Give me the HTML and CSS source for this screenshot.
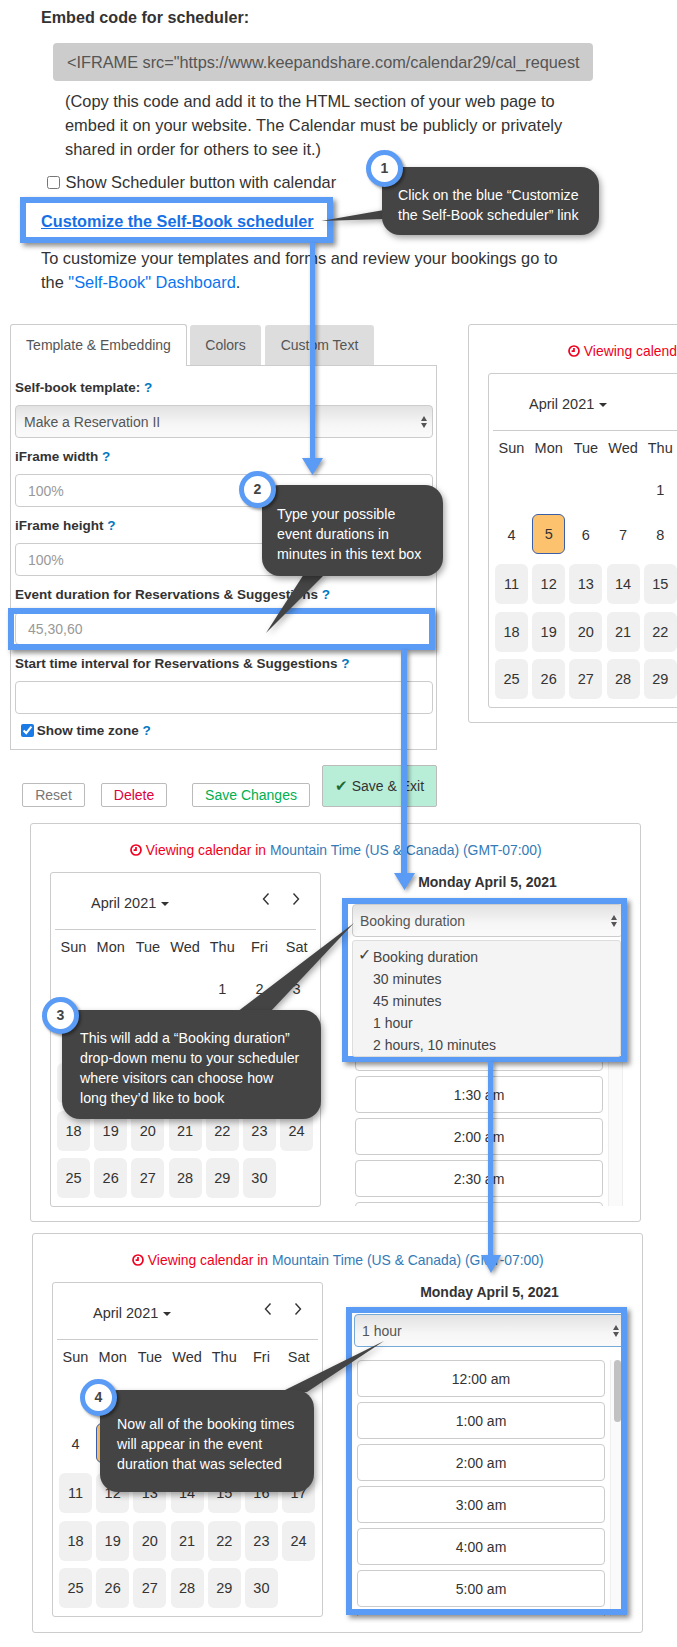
FILE: index.html
```html
<!DOCTYPE html>
<html lang="en">
<head>
    <meta charset="UTF-8">
    <meta name="viewport" content="width=device-width, initial-scale=1.0">
    <title>Self-Book scheduler</title>
    <link rel="stylesheet" href="styles.css">
</head>
<body>
    <div class="page">
        <h3 class="embed-title">Embed code for scheduler:</h3>
        <div class="code-box">&lt;IFRAME src="https://www.keepandshare.com/calendar29/cal_request</div>
        <p class="embed-note">(Copy this code and add it to the HTML section of your web page to embed it on your website. The Calendar must be publicly or privately shared in order for others to see it.)</p>
        <label class="show-button"><input type="checkbox"> Show Scheduler button with calendar</label>
        <a class="customize-link" href="#">Customize the Self-Book scheduler</a>
        <p class="dash-note">To customize your templates and forms and review your bookings go to<br>the <a href="#">"Self-Book" Dashboard</a>.</p>

        <div class="editor-row">
            <div class="editor">
                <div class="tabs">
                    <div class="tab active">Template &amp; Embedding</div>
                    <div class="tab tab-colors">Colors</div>
                    <div class="tab tab-text">Custom Text</div>
                </div>
                <div class="panel">
                    <div class="field">
                        <label>Self-book template: <span class="help">?</span></label>
                        <div class="select-wrap">
                            <select class="select"><option>Make a Reservation II</option></select>
                            <span class="updown"></span>
                        </div>
                    </div>
                    <div class="field">
                        <label>iFrame width <span class="help">?</span></label>
                        <input type="text" placeholder="100%">
                    </div>
                    <div class="field">
                        <label>iFrame height <span class="help">?</span></label>
                        <input type="text" placeholder="100%">
                    </div>
                    <div class="field">
                        <label>Event duration for Reservations &amp; Suggestions <span class="help">?</span></label>
                        <input type="text" placeholder="45,30,60">
                    </div>
                    <div class="field">
                        <label>Start time interval for Reservations &amp; Suggestions <span class="help">?</span></label>
                        <input type="text">
                    </div>
                    <label class="show-zone"><input type="checkbox" checked> Show time zone <span class="help">?</span></label>
                </div>
                <div class="actions">
                    <button class="btn btn-reset">Reset</button>
                    <button class="btn btn-delete">Delete</button>
                    <button class="btn btn-save">Save Changes</button>
                    <button class="btn btn-exit"><span class="tick-mark">✔</span> Save &amp; Exit</button>
                </div>
            </div>

            <div class="card card-one">
                <div class="tz-note"><svg class="clock" viewBox="0 0 12 12"><circle cx="6" cy="6" r="5"/><path d="M6 3v3.2H3.6"/></svg> Viewing calendar in <span class="tz-name">Mountain Time (US &amp; Canada) (GMT-07:00)</span></div>
                <div class="card-body">
                    <div class="cal">
                        <div class="cal-head">
                            <span class="month">April 2021</span><span class="caret"></span>
                        </div>
                        <div class="cal-grid">
                            <span class="dow">Sun</span><span class="dow">Mon</span><span class="dow">Tue</span><span class="dow">Wed</span><span class="dow">Thu</span><span class="dow">Fri</span><span class="dow">Sat</span>
                            <span></span><span></span><span></span><span></span><span class="day">1</span><span class="day">2</span><span class="day">3</span>
                            <span class="day">4</span><span class="day sel">5</span><span class="day">6</span><span class="day">7</span><span class="day">8</span><span class="day">9</span><span class="day">10</span>
                            <span class="day on">11</span><span class="day on">12</span><span class="day on">13</span><span class="day on">14</span><span class="day on">15</span><span class="day on">16</span><span class="day on">17</span>
                            <span class="day on">18</span><span class="day on">19</span><span class="day on">20</span><span class="day on">21</span><span class="day on">22</span><span class="day on">23</span><span class="day on">24</span>
                            <span class="day on">25</span><span class="day on">26</span><span class="day on">27</span><span class="day on">28</span><span class="day on">29</span><span class="day on">30</span>
                        </div>
                    </div>
                </div>
            </div>
        </div>

        <div class="card card-two">
            <div class="tz-note"><svg class="clock" viewBox="0 0 12 12"><circle cx="6" cy="6" r="5"/><path d="M6 3v3.2H3.6"/></svg> Viewing calendar in <span class="tz-name">Mountain Time (US &amp; Canada) (GMT-07:00)</span></div>
            <div class="card-body">
                <div class="cal">
                    <div class="cal-head">
                        <span class="month">April 2021</span><span class="caret"></span>
                        <svg class="nav nav-prev" viewBox="0 0 8 14"><path d="M6.5 1.5 1.5 7l5 5.500"/></svg>
                        <svg class="nav nav-next" viewBox="0 0 8 14"><path d="M1.500 1.500 6.500 7l-5 5.500"/></svg>
                    </div>
                    <div class="cal-grid">
                        <span class="dow">Sun</span><span class="dow">Mon</span><span class="dow">Tue</span><span class="dow">Wed</span><span class="dow">Thu</span><span class="dow">Fri</span><span class="dow">Sat</span>
                        <span></span><span></span><span></span><span></span><span class="day">1</span><span class="day">2</span><span class="day">3</span>
                        <span class="day">4</span><span class="day sel">5</span><span class="day">6</span><span class="day">7</span><span class="day">8</span><span class="day">9</span><span class="day">10</span>
                        <span class="day on">11</span><span class="day on">12</span><span class="day on">13</span><span class="day on">14</span><span class="day on">15</span><span class="day on">16</span><span class="day on">17</span>
                        <span class="day on">18</span><span class="day on">19</span><span class="day on">20</span><span class="day on">21</span><span class="day on">22</span><span class="day on">23</span><span class="day on">24</span>
                        <span class="day on">25</span><span class="day on">26</span><span class="day on">27</span><span class="day on">28</span><span class="day on">29</span><span class="day on">30</span>
                    </div>
                </div>
                <div class="slots">
                    <div class="slots-title">Monday April 5, 2021</div>
                    <div class="select-wrap">
                        <select class="select"><option>Booking duration</option></select>
                        <span class="updown"></span>
                    </div>
                    <ul class="duration-menu">
                        <li><span class="check">✓</span>Booking duration</li>
                        <li>30 minutes</li>
                        <li>45 minutes</li>
                        <li>1 hour</li>
                        <li>2 hours, 10 minutes</li>
                    </ul>
                    <div class="slot-area">
                        <div class="slot-list">
                            <button class="slot">12:00 am</button>
                            <button class="slot">12:30 am</button>
                            <button class="slot">1:00 am</button>
                            <button class="slot">1:30 am</button>
                            <button class="slot">2:00 am</button>
                            <button class="slot">2:30 am</button>
                            <button class="slot">3:00 am</button>
                        </div>
                        <div class="scrollbar"></div>
                    </div>
                </div>
            </div>
        </div>

        <div class="card card-three">
            <div class="tz-note"><svg class="clock" viewBox="0 0 12 12"><circle cx="6" cy="6" r="5"/><path d="M6 3v3.2H3.6"/></svg> Viewing calendar in <span class="tz-name">Mountain Time (US &amp; Canada) (GMT-07:00)</span></div>
            <div class="card-body">
                <div class="cal">
                    <div class="cal-head">
                        <span class="month">April 2021</span><span class="caret"></span>
                        <svg class="nav nav-prev" viewBox="0 0 8 14"><path d="M6.5 1.5 1.5 7l5 5.500"/></svg>
                        <svg class="nav nav-next" viewBox="0 0 8 14"><path d="M1.500 1.500 6.500 7l-5 5.500"/></svg>
                    </div>
                    <div class="cal-grid">
                        <span class="dow">Sun</span><span class="dow">Mon</span><span class="dow">Tue</span><span class="dow">Wed</span><span class="dow">Thu</span><span class="dow">Fri</span><span class="dow">Sat</span>
                        <span></span><span></span><span></span><span></span><span class="day">1</span><span class="day">2</span><span class="day">3</span>
                        <span class="day">4</span><span class="day sel">5</span><span class="day">6</span><span class="day">7</span><span class="day">8</span><span class="day">9</span><span class="day">10</span>
                        <span class="day on">11</span><span class="day on">12</span><span class="day on">13</span><span class="day on">14</span><span class="day on">15</span><span class="day on">16</span><span class="day on">17</span>
                        <span class="day on">18</span><span class="day on">19</span><span class="day on">20</span><span class="day on">21</span><span class="day on">22</span><span class="day on">23</span><span class="day on">24</span>
                        <span class="day on">25</span><span class="day on">26</span><span class="day on">27</span><span class="day on">28</span><span class="day on">29</span><span class="day on">30</span>
                    </div>
                </div>
                <div class="slots">
                    <div class="slots-title">Monday April 5, 2021</div>
                    <div class="select-wrap">
                        <select class="select select-focus"><option>1 hour</option></select>
                        <span class="updown"></span>
                    </div>
                    <div class="slot-area">
                        <div class="slot-list">
                            <button class="slot">12:00 am</button>
                            <button class="slot">1:00 am</button>
                            <button class="slot">2:00 am</button>
                            <button class="slot">3:00 am</button>
                            <button class="slot">4:00 am</button>
                            <button class="slot">5:00 am</button>
                            <button class="slot">6:00 am</button>
                        </div>
                        <div class="scrollbar"><span class="thumb"></span></div>
                    </div>
                </div>
            </div>
        </div>

        <!-- annotations drawn over the screenshot -->
        <div class="hl hl-link"></div>
        <div class="hl hl-duration"></div>
        <div class="hl hl-menu"></div>
        <div class="hl hl-times"></div>

        <svg class="arrows" viewBox="0 0 677 1647">
            <g class="tails">
                <polygon points="321,221 384,210 384,219"/>
                <polygon points="304,574 325,574 266,633"/>
                <polygon points="237,1012 270,1012 354,923"/>
                <polygon points="281,1392 307,1392 384,1341"/>
            </g>
            <g class="arrow-lines">
                <path d="M310 243h5v215h8l-10.500 17-10.500-17h8z"/>
                <path d="M401 650h6v223h8l-10.500 17-10.500-17h7z"/>
                <path d="M488 1062h5v193h8l-10 18-10-18h7z"/>
            </g>
        </svg>

        <div class="callout callout-1">Click on the blue “Customize<br>the Self-Book scheduler” link</div>
        <div class="callout callout-2">Type your possible<br>event durations in<br>minutes in this text box</div>
        <div class="callout callout-3">This will add a “Booking duration”<br>drop-down menu to your scheduler<br>where visitors can choose how<br>long they’d like to book</div>
        <div class="callout callout-4">Now all of the booking times<br>will appear in the event<br>duration that was selected</div>

        <div class="step step-1">1</div>
        <div class="step step-2">2</div>
        <div class="step step-3">3</div>
        <div class="step step-4">4</div>
    </div>
</body>
</html>
```

FILE: styles.css
```css
html, body {
    margin: 0;
    padding: 0;
    background-color: #fff;
}
body {
    font-family: "Liberation Sans", Arial, sans-serif;
    font-size: 14px;
    color: #333;
}
.page {
    position: relative;
    width: 677px;
    height: 1647px;
    overflow: hidden;
}

/* embed section */
.embed-title {
    margin: 0;
    padding: 7px 0 0 41px;
    font-size: 16.150px;
    line-height: 20px;
    font-weight: bold;
}
.code-box {
    margin: 16px 0 0 53px;
    width: 526px;
    height: 38px;
    padding-left: 14px;
    line-height: 38px;
    font-size: 16.300px;
    color: #555;
    background-color: #ccc;
    border-radius: 4px;
    white-space: nowrap;
    overflow: hidden;
}
.embed-note {
    margin: 8px 0 0 65px;
    width: 530px;
    font-size: 16.400px;
    line-height: 24px;
}
.show-button {
    display: block;
    margin: 11px 0 0 47px;
    font-size: 16.400px;
    line-height: 20px;
}
.show-button input {
    margin: 0 1px 0 0;
    width: 13px;
    height: 13px;
    vertical-align: -1px;
}
.customize-link {
    display: block;
    margin: 19px 0 0 41px;
    font-size: 16.250px;
    line-height: 20px;
    font-weight: bold;
    color: #1570e6;
}
.dash-note {
    margin: 15px 0 0 41px;
    font-size: 16.400px;
    line-height: 24px;
}
.dash-note a {
    color: #0a74f0;
    text-decoration: none;
}

/* template form */
.editor-row {
    display: flex;
    gap: 31px;
    margin: 30px 0 0 10px;
    align-items: flex-start;
}
.editor {
    flex: 0 0 427px;
}
.tabs {
    display: flex;
    gap: 3px;
    margin-bottom: -1px;
    position: relative;
}
.tab {
    height: 40px;
    line-height: 40px;
    font-size: 14px;
    text-align: center;
    color: #555;
    background-color: #ddd;
    margin-top: 1px;
    border-radius: 3px 3px 0 0;
}
.tab-colors {
    width: 71px;
}
.tab-text {
    width: 109px;
    margin-left: 1px;
}
.tab.active {
    margin-top: 0;
    height: 41px;
    width: 175px;
    background-color: #fff;
    border: 1px solid #ccc;
    border-bottom: none;
}
.panel {
    height: 371px;
    border: 1px solid #ccc;
    padding: 12px 3px 0 4px;
}
.field {
    margin-bottom: 9px;
}
.field label, .show-zone {
    display: block;
    font-size: 13.500px;
    line-height: 20px;
    font-weight: bold;
    margin-bottom: 7px;
}
.help {
    color: #0077c0;
}
.field input {
    display: block;
    box-sizing: border-box;
    width: 418px;
    height: 33px;
    padding: 0 12px;
    font: inherit;
    font-size: 14px;
    border: 1px solid #ccc;
    border-radius: 4px;
}
.field input::placeholder {
    color: #999;
}
.show-zone {
    margin-left: 6px;
    margin-top: -2px;
}
.show-zone input {
    margin: 0 -1px 0 0;
    width: 13px;
    height: 13px;
    vertical-align: -2px;
    accent-color: #1a7ae6;
}
.select-wrap {
    position: relative;
}
.select {
    display: block;
    box-sizing: border-box;
    width: 100%;
    height: 33px;
    padding: 0 8px;
    font: inherit;
    font-size: 14px;
    color: #555;
    border: 1px solid #ccc;
    border-radius: 4px;
    appearance: none;
    background: linear-gradient(#e2e2e2, #f6f6f6 60%, #fafafa);
}
.slots .select {
    padding-left: 7px;
}
.select-focus {
    border-color: #74a9d8;
}
.updown, .updown::before {
    position: absolute;
}
.updown {
    right: 6px;
    top: 50%;
    margin-top: 1px;
    border-left: 3.500px solid transparent;
    border-right: 3.500px solid transparent;
    border-top: 5px solid #555;
}
.updown::before {
    content: "";
    left: -3.500px;
    top: -12px;
    border-left: 3.500px solid transparent;
    border-right: 3.500px solid transparent;
    border-bottom: 5px solid #555;
}
.actions {
    display: flex;
    align-items: flex-end;
    margin-top: 15px;
    padding-left: 12px;
}
.btn {
    box-sizing: border-box;
    height: 24px;
    padding: 0;
    font: inherit;
    font-size: 14px;
    background-color: #fff;
    border: 1px solid #bbb;
    border-radius: 2px;
}
.btn-reset {
    width: 63px;
    color: #777;
}
.btn-delete {
    width: 66px;
    margin-left: 16px;
    color: #e0003c;
}
.btn-save {
    width: 118px;
    margin-left: 25px;
    color: #00b050;
}
.btn-exit {
    width: 115px;
    height: 42px;
    margin-left: 12px;
    color: #333;
    background-color: #b8eed8;
}
.tick-mark {
    font-size: 15px;
    color: #1d6b33;
}

/* scheduler cards */
.card {
    flex: 0 0 auto;
    box-sizing: border-box;
    width: 611px;
    height: 400px;
    border: 1px solid #ccc;
    border-radius: 3px;
    padding: 16px 0 0 19px;
}
.card-one {
    height: 399px;
}
.card-two {
    height: 399px;
    margin: 16px 0 0 30px;
}
.card-three {
    margin: 11px 0 0 32px;
}
.tz-note {
    margin-left: -19px;
    padding-left: 99px;
    font-size: 13.900px;
    line-height: 20px;
    color: #f00020;
    white-space: nowrap;
}
.tz-name {
    color: #337ab7;
}
.clock {
    width: 12px;
    height: 12px;
    vertical-align: -1px;
    fill: none;
    stroke: #f00020;
    stroke-width: 1.700;
}
.card-body {
    display: flex;
    gap: 31px;
    margin-top: 12px;
}
.cal {
    flex: 0 0 auto;
    box-sizing: border-box;
    width: 271px;
    height: 335px;
    border: 1px solid #ccc;
    border-radius: 3px;
    padding: 0 4px;
}
.cal-head {
    position: relative;
    height: 56px;
    border-bottom: 1px solid #ccc;
    padding-left: 36px;
    line-height: 60px;
    font-size: 14.500px;
}
.caret {
    display: inline-block;
    margin-left: 5px;
    vertical-align: 2px;
    border-left: 4px solid transparent;
    border-right: 4px solid transparent;
    border-top: 4px solid #333;
}
.nav {
    position: absolute;
    top: 19px;
    width: 8px;
    height: 14px;
    fill: none;
    stroke: #333;
    stroke-width: 1.400;
}
.nav-prev {
    left: 207px;
}
.nav-next {
    left: 237px;
}
.cal-grid {
    display: grid;
    grid-template-columns: repeat(7, 33px);
    grid-template-rows: 31px 38px 41.500px repeat(3, 40px);
    column-gap: 4.200px;
    row-gap: 7.500px;
    padding: 0 0 0 2px;
    font-size: 14.500px;
    text-align: center;
}
.dow {
    line-height: 34px;
    white-space: nowrap;
}
.day {
    line-height: 40px;
    border-radius: 6px;
}
.day.on {
    background-color: #f0f0f0;
}
.day.sel {
    box-sizing: border-box;
    height: 40px;
    margin-top: -1px;
    line-height: 38px;
    background-color: #fdc26d;
    border: 1px solid #3a5fa8;
}
.slots {
    position: relative;
    flex: 0 0 269px;
}
.slots-title {
    height: 20px;
    margin-bottom: 12px;
    line-height: 20px;
    font-weight: bold;
    font-size: 14px;
    text-align: center;
}
.duration-menu {
    position: absolute;
    z-index: 2;
    left: 0;
    top: 68px;
    box-sizing: border-box;
    width: 269px;
    height: 117px;
    margin: 0;
    padding: 5px 0 0 20px;
    list-style: none;
    font-size: 14px;
    line-height: 22px;
    color: #444;
    background-color: #f4f4f4;
    border: 1px solid #ddd;
    border-radius: 3px;
}
.check {
    position: absolute;
    left: 5px;
    top: 3px;
    font-size: 16px;
}
.slot-area {
    display: flex;
    gap: 5px;
    height: 256px;
    margin-top: 13px;
    overflow: hidden;
}
.slot-list {
    display: flex;
    flex-direction: column;
    gap: 5px;
    flex: 0 0 248px;
    margin-left: 3px;
}
.slot {
    flex: 0 0 37px;
    padding: 0;
    font: inherit;
    font-size: 14px;
    color: #333;
    background-color: #fff;
    border: 1px solid #ccc;
    border-radius: 4px;
}
.scrollbar {
    flex: 0 0 13px;
    background-color: #fafafa;
    border-left: 1px solid #eee;
    border-right: 1px solid #eee;
}
.thumb {
    display: block;
    width: 7px;
    height: 62px;
    margin: 0 auto;
    background-color: #c1c1c1;
    border-radius: 4px;
}

/* annotations */
.hl {
    position: absolute;
    box-sizing: border-box;
    border: 6px solid #5a9bf6;
    box-shadow: 3px 3px 5px rgba(0, 0, 0, 0.45);
}
.hl-link {
    left: 20px;
    top: 197px;
    width: 313px;
    height: 46px;
}
.hl-duration {
    left: 8px;
    top: 608px;
    width: 427px;
    height: 42px;
}
.hl-menu {
    left: 342px;
    top: 898px;
    width: 285px;
    height: 164px;
}
.hl-times {
    left: 346px;
    top: 1307px;
    width: 281px;
    height: 308px;
}
.arrows {
    position: absolute;
    left: 0;
    top: 0;
    width: 677px;
    height: 1647px;
}
.tails {
    fill: #444;
    filter: drop-shadow(2px 2px 3px rgba(0, 0, 0, 0.35));
}
.arrow-lines {
    fill: #5a9bf6;
    filter: drop-shadow(2px 2px 2px rgba(0, 0, 0, 0.4));
}
.callout {
    position: absolute;
    padding-left: 16px;
    box-sizing: border-box;
    color: #fff;
    font-size: 14.200px;
    line-height: 20px;
    white-space: nowrap;
    background-color: #444;
    border-radius: 18px;
    box-shadow: 2px 3px 6px rgba(0, 0, 0, 0.35);
}
.callout-1 {
    left: 382px;
    top: 167px;
    width: 217px;
    height: 68px;
    padding-top: 18px;
}
.callout-2 {
    left: 262px;
    top: 485px;
    width: 181px;
    height: 91px;
    padding: 19px 0 0 15px;
}
.callout-3 {
    left: 62px;
    top: 1010px;
    width: 259px;
    height: 109px;
    padding: 18px 0 0 18px;
}
.callout-4 {
    left: 100px;
    top: 1390px;
    width: 214px;
    height: 102px;
    padding: 24px 0 0 17px;
}
.step {
    position: absolute;
    box-sizing: border-box;
    width: 37px;
    height: 37px;
    line-height: 27px;
    text-align: center;
    font-size: 14px;
    font-weight: bold;
    color: #444;
    background-color: #fff;
    border: 5px solid #5a9bf6;
    border-radius: 50%;
    box-shadow: 2px 2px 3px rgba(0, 0, 0, 0.4);
}
.step-1 {
    left: 366px;
    top: 150px;
}
.step-2 {
    left: 239px;
    top: 471px;
}
.step-3 {
    left: 42px;
    top: 997px;
}
.step-4 {
    left: 80px;
    top: 1379px;
}
```
